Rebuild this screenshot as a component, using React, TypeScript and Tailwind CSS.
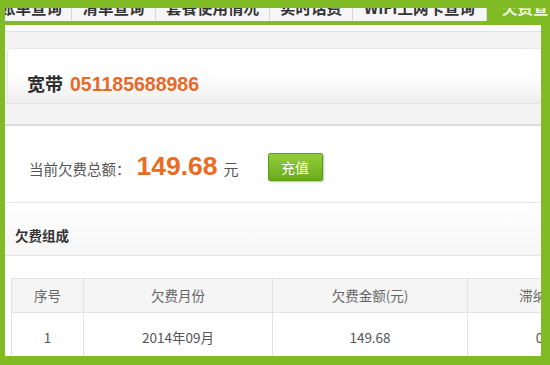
const tabs = [
  { label: "账单查询", w: "w-[67px]", extra: "justify-end pr-[9px]" },
  { label: "清单查询", w: "w-[84px]", extra: "justify-center" },
  { label: "套餐使用情况", w: "w-[114px]", extra: "justify-center" },
  { label: "实时话费", w: "w-[83px]", extra: "justify-center" },
  { label: "WIFI上网卡查询", w: "w-[134px]", extra: "justify-center" },
];

const rows = [{ no: "1", month: "2014年09月", amount: "149.68", late: "0" }];

export default function App() {
  return (
    <div className="w-[550px] h-[365px] overflow-hidden bg-[#80ba24] flex flex-col pt-[8px] pb-[9px] font-['Noto_Sans_CJK_SC',sans-serif]">
      {/* tabs, cut off at the top by the frame */}
      <div className="flex h-[13px] overflow-hidden pl-[5px]">
        {tabs.map((t) => (
          <div
            key={t.label}
            className={`${t.w} ${t.extra} shrink-0 flex bg-[#f6f6f6] border-r border-[#d9d9d9] overflow-hidden`}
          >
            <span className="whitespace-nowrap text-[15.5px] leading-[15px] mt-[-8px] font-bold text-[#333]">
              {t.label}
            </span>
          </div>
        ))}
        <div className="flex-1 flex pl-[15px] overflow-hidden">
          <span className="whitespace-nowrap text-[15.5px] leading-[15px] mt-[-8px] font-bold text-[#f1f7dc]">
            欠费查询
          </span>
        </div>
      </div>

      <div className="flex-1 mt-[4px] ml-[5px] mr-[9px] bg-[#f3f3f3] overflow-hidden flex flex-col">
        <div className="h-[7px] bg-[#fbfbfb] border-b border-[#e1e1e1] shrink-0" />
        <div className="h-[16px] shrink-0" />

        {/* number card */}
        <div className="ml-[2px] rounded-tl-[5px] border-l border-t border-[#e8e8e8] bg-gradient-to-b from-white from-50% to-[#eeeeee] h-[55px] shrink-0 pl-[19px] pt-[24px]">
          <div className="flex items-baseline leading-[20px]">
            <span className="text-[18px] font-semibold text-[#2b2b2b]">宽带</span>
            <span className="ml-[7px] text-[19.5px] font-bold text-[#e8692a] font-['Liberation_Sans',sans-serif]">
              051185688986
            </span>
          </div>
        </div>
        <div className="h-[23px] shrink-0 bg-[#f3f3f3] border-t border-[#e4e4e4] border-b-2 border-b-[#dcdcdc]" />

        {/* total */}
        <div className="h-[77px] shrink-0 bg-white border-b border-[#e6e6e6] flex items-center pl-[24px] pt-[6px]">
          <div className="flex items-baseline">
            <span className="text-[14.5px] text-[#555]">当前欠费总额：</span>
            <span className="ml-[6px] text-[26.5px] font-bold text-[#ec6b21] font-['Liberation_Sans',sans-serif]">
              149.68
            </span>
            <span className="ml-[6px] text-[15px] text-[#555]">元</span>
          </div>
          <button className="ml-[29px] w-[55px] h-[28px] rounded-[2px] border border-[#5f9c16] bg-gradient-to-b from-[#94cc3f] to-[#6aab18] text-white text-[14px] shadow-[1px_1px_2px_rgba(0,0,0,0.25)]">
            充值
          </button>
        </div>

        {/* section title */}
        <div className="h-[53px] shrink-0 bg-gradient-to-b from-white to-[#f6f6f6] border-b border-[#e2e2e2] pl-[10px] pt-[22px]">
          <span className="block leading-[20px] text-[13.5px] font-bold text-[#333]">欠费组成</span>
        </div>

        {/* table */}
        <div className="flex-1 bg-white pt-[22px] pl-[6px]">
          <table className="border-collapse table-fixed w-[600px] text-[13.5px] text-[#555]">
            <thead>
              <tr className="h-[34px] bg-[#f5f5f5] text-[#666]">
                <th className="w-[72px] border border-[#e3e3e3] font-normal">序号</th>
                <th className="w-[189px] border border-[#e3e3e3] font-normal">欠费月份</th>
                <th className="w-[195px] border border-[#e3e3e3] font-normal">欠费金额(元)</th>
                <th className="w-[144px] border border-[#e3e3e3] font-normal">滞纳金</th>
              </tr>
            </thead>
            <tbody>
              {rows.map((r) => (
                <tr key={r.no} className="h-[50px]">
                  <td className="border border-[#e3e3e3] text-center">{r.no}</td>
                  <td className="border border-[#e3e3e3] text-center">{r.month}</td>
                  <td className="border border-[#e3e3e3] text-center">{r.amount}</td>
                  <td className="border border-[#e3e3e3] text-center">{r.late}</td>
                </tr>
              ))}
            </tbody>
          </table>
        </div>
      </div>
    </div>
  );
}
